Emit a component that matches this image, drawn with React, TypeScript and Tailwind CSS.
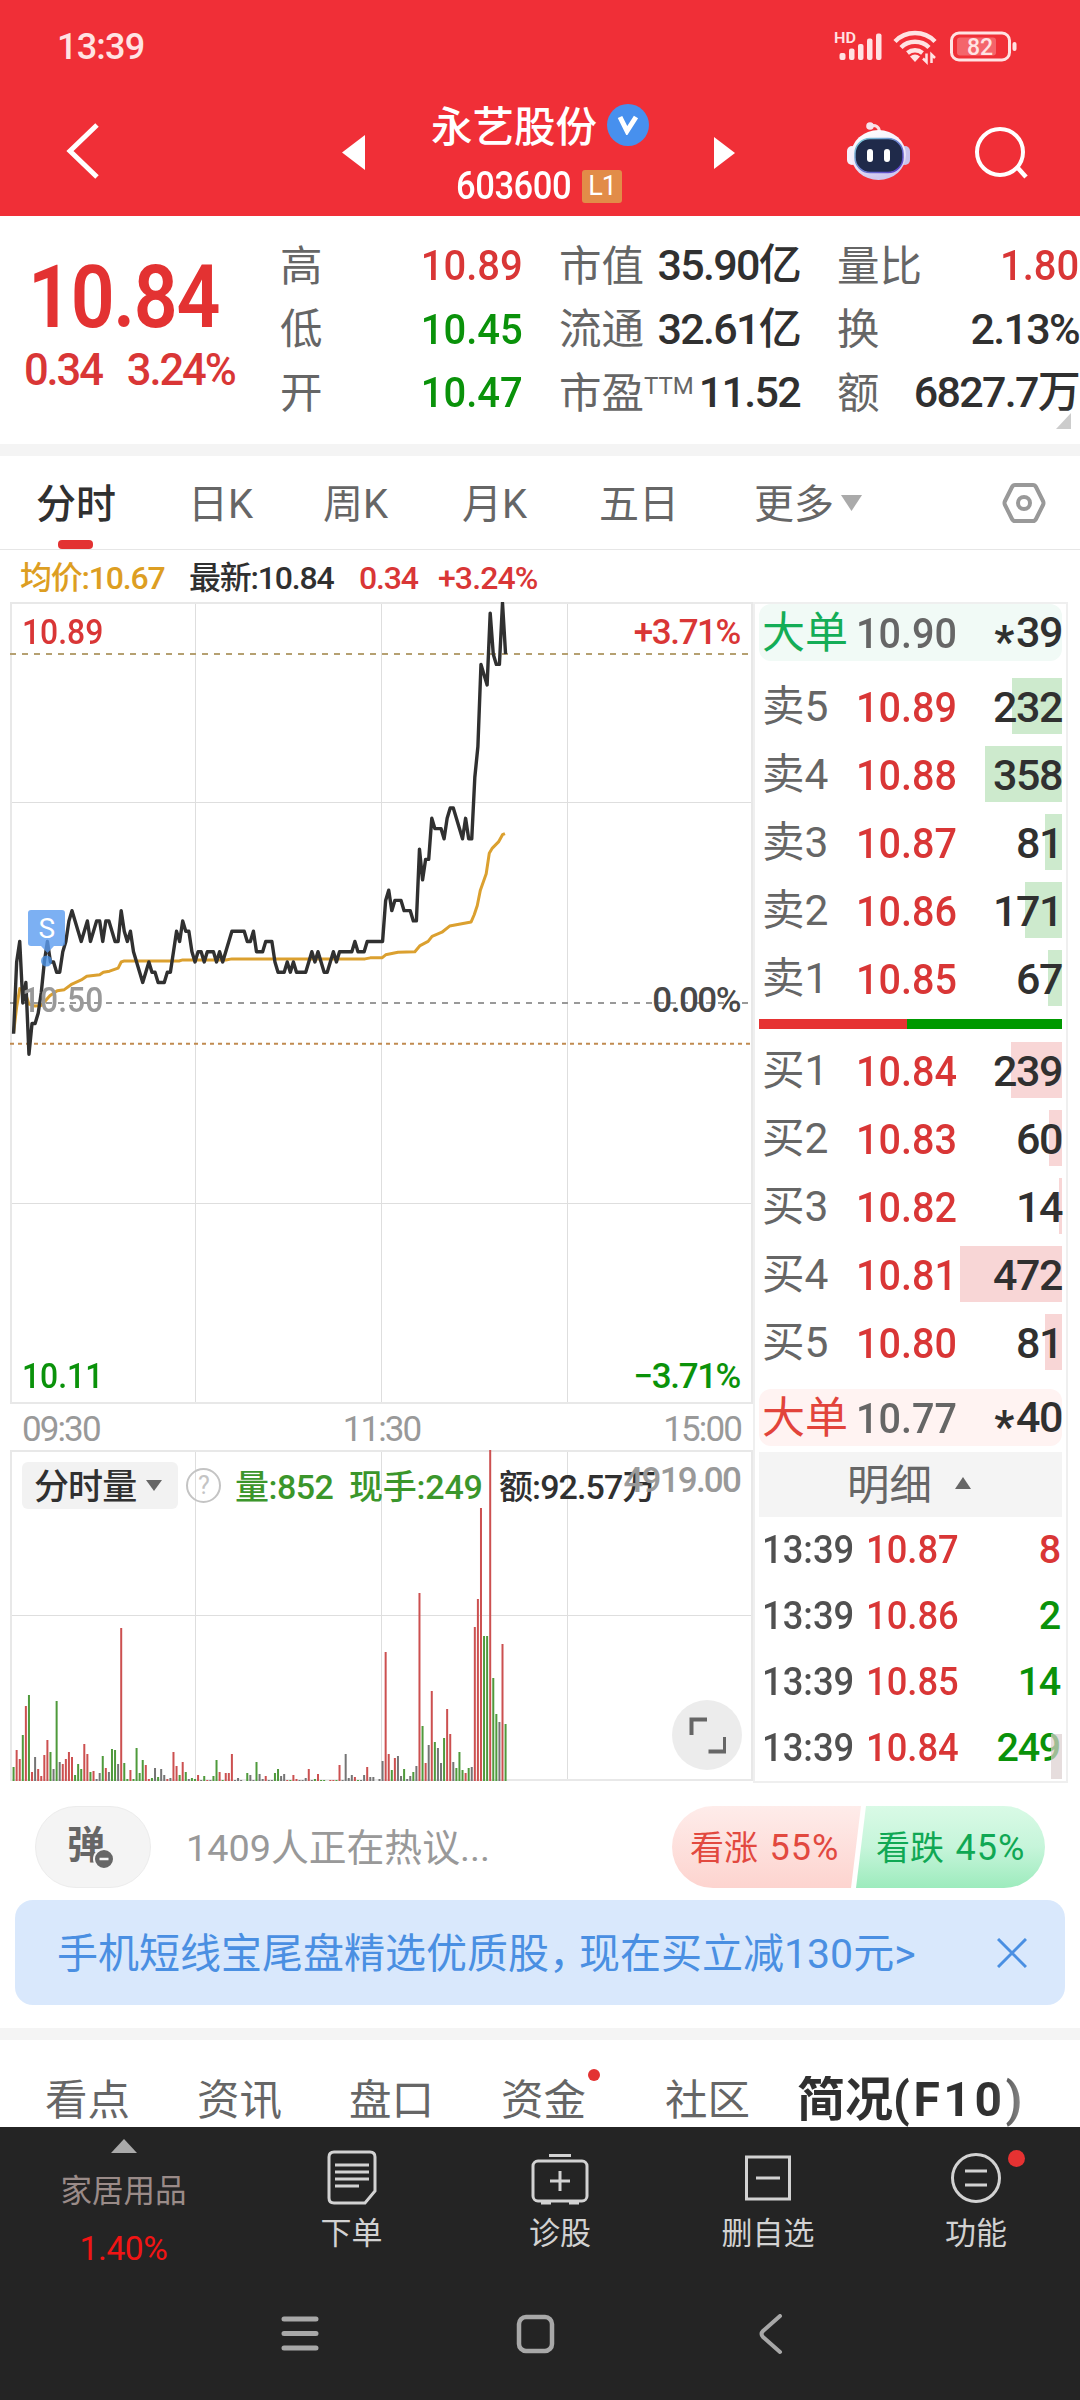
import type { ReactNode } from "react";
import clsx from "clsx";

const RED = "text-[#d93636]";
const GREEN = "text-[#0a920a]";

// cents above / below the previous close (10.50), one value per minute
const prices = [
  -3, 4, 6, 0, 2, -5, -2, -2, -1, 1, 4, 6, 4, 4, 3, 3, 5, 6, 8, 9, 8, 7, 6, 7, 8, 6, 7, 8, 8, 6, 8, 8, 7, 6, 6, 9, 7, 6, 7, 5,
  4, 3, 2, 3, 4, 3, 3, 2, 2, 2, 3, 3, 5, 7, 6, 8, 7, 7, 5, 4, 5, 5, 4, 5, 5, 5, 4, 5, 4, 5, 6, 7, 7, 7, 7, 7, 6, 6, 7, 5,
  5, 5, 6, 6, 6, 4, 3, 3, 3, 4, 3, 4, 3, 3, 3, 3, 4, 5, 4, 5, 4, 3, 3, 4, 5, 4, 5, 5, 5, 5, 5, 6, 5, 5, 5, 6, 6, 6, 6, 6,
  6, 10, 11, 9, 10, 10, 10, 9, 9, 9, 8, 8, 15, 12, 14, 14, 18, 17, 17, 17, 16, 18, 19, 19, 18, 17, 16, 18, 16, 16, 22, 25, 33, 32, 31, 38, 34, 33, 33, 39,
  34,
];

// [minute, cents]
const average: [number, number][] = [
  [1, -2.9], [2, -0.4], [3, 1.4], [4, 1.3], [5, 0.8], [6, -0.1], [8, -0.3], [10, -0.25], [11, 0.1], [12.8, 0.7],
  [15.2, 1.2], [17.5, 1.3], [20, 1.85], [23, 2.25], [24.8, 2.6], [29, 2.75], [30.2, 3], [32.2, 3.1], [35, 3.4], [36, 4],
  [37, 4.1], [54.8, 4.1], [56, 4.2], [70, 4.2], [72, 4.3], [115.3, 4.3], [117, 4.4], [120.8, 4.4], [122, 4.7], [126, 4.95],
  [131.5, 5], [133.2, 5.6], [135.8, 6], [137.1, 6.5], [140.3, 6.9], [142.8, 7.5], [149.8, 7.9], [150.8, 8.6], [151.8, 9.5],
  [152.8, 11], [154.7, 12.6], [155.7, 14.6], [156.7, 15.1], [158.7, 15.7], [160, 16.4], [160.8, 16.5],
];

// r = up, g = down, k = flat, followed by the bar height
const volumes = (
  "g14 r31 r22 g46 r75 g86 r9 k24 r12 r5 r26 r41 g29 k12 g80 k19 r17 r22 r29 r24 g6 g17 g12 r37 r27 g9 r10 k2 k8 g25 r13 k9 g32 g31 k17 r153 g18 g2 r11 g2 " +
  "g33 g8 g21 r16 r2 g3 k13 g4 k12 k6 r2 k3 r29 r15 g6 r19 g9 k2 g3 g2 r6 k1 g5 r1 k1 g5 g21 r9 g1 r8 r8 r27 k1 k3 k1 k0 g8 k6 k1 g19 " +
  "k7 k2 r5 k1 k1 g8 g12 k5 k7 r1 g1 r6 r2 k1 k1 k3 r12 k1 g2 r7 g1 g1 k0 r1 r1 g1 r16 k1 k27 k3 k6 r4 g1 k1 k6 r14 k4 k4 k0 k2 " +
  "k20 r129 r27 g11 r23 k25 k5 g12 k2 k5 g9 k15 r188 g55 r18 k36 r90 g39 k33 k18 g43 r72 r47 k19 g13 g29 g11 r8 g13 k14 r154 r182 r273 g145 g145 r331 g103 g67 k59 r137 g57"
).split(" ");

const BAR: Record<string, string> = { r: "#cc5050", g: "#4f9a3c", k: "#757575" };

const px = (minute: number) => 0.5 + minute * 3.075;
const py = (cents: number) => 401 - cents * 10.26;

const asks = [
  { label: "卖5", price: "10.89", vol: 232 },
  { label: "卖4", price: "10.88", vol: 358 },
  { label: "卖3", price: "10.87", vol: 81 },
  { label: "卖2", price: "10.86", vol: 171 },
  { label: "卖1", price: "10.85", vol: 67 },
];

const bids = [
  { label: "买1", price: "10.84", vol: 239 },
  { label: "买2", price: "10.83", vol: 60 },
  { label: "买3", price: "10.82", vol: 14 },
  { label: "买4", price: "10.81", vol: 472 },
  { label: "买5", price: "10.80", vol: 81 },
];

const ticks = [
  { price: "10.87", vol: "8", color: RED },
  { price: "10.86", vol: "2", color: GREEN },
  { price: "10.85", vol: "14", color: GREEN },
  { price: "10.84", vol: "249", color: GREEN },
];

function StatusBar() {
  return (
    <div className="flex h-[93px] items-center justify-between pl-[57px] pr-[63px] text-[#ffe3e3]">
      <span className="text-[36px] font-medium leading-none tracking-[-0.800px]">13:39</span>
      <svg width="184" height="40" viewBox="0 0 184 40" fill="none">
        <text x="1" y="15.500" fill="currentColor" fontSize="15" fontWeight="600" textLength="22" lengthAdjust="spacingAndGlyphs">HD</text>
        <g fill="currentColor">
          <rect x="6.500" y="26" width="6" height="7" rx="2" />
          <rect x="16" y="21.500" width="5.500" height="11.500" rx="2" />
          <rect x="25" y="17" width="5.500" height="16" rx="2" />
          <rect x="34" y="11.500" width="5.500" height="21.500" rx="2" />
          <rect x="43" y="6.500" width="5.500" height="26.500" rx="2" />
        </g>
        <g stroke="currentColor" strokeWidth="4.500">
          <path d="M62 14.500a28 28 0 0 1 40 0" />
          <path d="M68 20.500a20 20 0 0 1 28 0" />
          <path d="M74.500 26a12 12 0 0 1 15 0" />
        </g>
        <path d="M82 35l-5-5.500q5-4 10 0z" fill="currentColor" />
        <path d="M93.500 26.500V35l-3.500-3.500M98.500 36v-8.500l3.500 3.500" stroke="currentColor" strokeWidth="2.500" />
        <rect x="118.500" y="6" width="58" height="27" rx="7.500" stroke="currentColor" strokeWidth="3" />
        <rect x="124" y="10.500" width="39" height="18" rx="3" fill="currentColor" opacity="0.3" />
        <rect x="179.500" y="15" width="4" height="9" rx="2" fill="currentColor" />
        <text x="134" y="28" fill="currentColor" fontSize="23" fontWeight="500">82</text>
      </svg>
    </div>
  );
}

function Robot() {
  return (
    <svg width="66" height="62" viewBox="0 0 66 62">
      <defs>
        <linearGradient id="shell" x1="0" y1="0" x2="0.300" y2="1">
          <stop offset="0" stopColor="#fff" />
          <stop offset="0.600" stopColor="#f1ebfa" />
          <stop offset="1" stopColor="#cfc8ee" />
        </linearGradient>
        <linearGradient id="rim" x1="0" y1="0" x2="1" y2="1">
          <stop offset="0" stopColor="#7fd0d8" />
          <stop offset="1" stopColor="#5a35c8" />
        </linearGradient>
      </defs>
      <path d="M24 5q9-2 9.500 6" stroke="#fbdfe4" strokeWidth="3" fill="none" />
      <circle cx="24" cy="5" r="3.800" fill="#f6e4ee" />
      <rect x="1" y="25" width="10" height="19" rx="5" fill="#f6f0fb" />
      <rect x="54" y="25" width="10" height="19" rx="5" fill="#c9c3ec" />
      <ellipse cx="32.500" cy="34" rx="27.500" ry="25" fill="url(#shell)" />
      <rect x="9" y="17.500" width="48" height="34" rx="15" fill="#1f2a4a" stroke="url(#rim)" strokeWidth="1.500" />
      <rect x="21" y="28" width="6" height="13" rx="3" fill="#fff" />
      <rect x="38" y="28" width="6" height="13" rx="3" fill="#fff" />
    </svg>
  );
}

function Header() {
  return (
    <header className="h-[216px] bg-[#f02f37] text-white">
      <StatusBar />
      <div className="flex h-[123px] pl-[65px]">
        <svg className="mt-[28px]" width="36" height="60" viewBox="0 0 36 60" fill="none">
          <path d="M32 4L5 30l27 26" stroke="#fff" strokeWidth="5" />
        </svg>
        <svg className="ml-[241px] mt-[42px]" width="23" height="35">
          <path d="M23 0v35L0 17.500z" fill="#fff" />
        </svg>
        <div className="ml-[60px] mt-[8px] flex w-[230px] flex-col">
          <div className="flex h-[48px] items-center pl-[6px]">
            <span className="pt-[6px] text-[41.500px] font-medium leading-none">永艺股份</span>
            <span className="ml-[10px] flex size-[42px] shrink-0 items-center justify-center rounded-full bg-[#4790ee]">
              <svg width="22" height="20" viewBox="0 0 22 20" fill="none">
                <path d="M3 2l7 14L19 2" stroke="#fff" strokeWidth="5" />
              </svg>
            </span>
          </div>
          <div className="mt-[20px] flex h-[34px] items-center pl-[31px]">
            <span className="w-[114px] origin-left scale-x-[0.91] text-[38px] font-medium leading-none tracking-[-0.500px]">603600</span>
            <span className="ml-[12px] flex h-[33px] w-[40px] items-center justify-center rounded-[3px] bg-[#e28c48] text-[27px] leading-none tracking-[-1px]">L1</span>
          </div>
        </div>
        <svg className="ml-[59px] mt-[44px]" width="22" height="32">
          <path d="M0 0v32l21-16z" fill="#fff" />
        </svg>
        <span className="ml-[110px] mt-[28px]"><Robot /></span>
        <svg className="ml-[61px] mt-[28px]" width="60" height="62" viewBox="0 0 60 62" fill="none">
          <circle cx="27" cy="31" r="23" stroke="#fff" strokeWidth="4" />
          <path d="M44 46l9 10" stroke="#fff" strokeWidth="4.500" />
        </svg>
      </div>
    </header>
  );
}

function Stat({ label, value, color }: { label: ReactNode; value: string; color?: string }) {
  return (
    <div className="flex h-[63.500px] items-center justify-between whitespace-nowrap">
      <span className="pt-[2px] text-[42.500px] leading-none text-[#666]">{label}</span>
      <span
        className={clsx(
          "text-[43px] font-medium leading-none",
          color ? "origin-right scale-x-[0.93]" : "tracking-[-1.700px] text-[#303030]",
          color,
        )}
      >
        {value}
      </span>
    </div>
  );
}

function Quote() {
  return (
    <section className="flex h-[228px]">
      <div className={clsx("w-[280px] pt-[38px]", RED)}>
        <div className="ml-[28px] origin-left scale-x-[0.885] text-[87px] font-semibold leading-[86px] tracking-[-1.500px] text-[#e33232]">10.84</div>
        <div className="mt-[9px] flex gap-[25px] pl-[24px] text-[43.500px] font-medium leading-[44px] tracking-[-2.100px]">
          <span>0.34</span>
          <span>3.24%</span>
        </div>
      </div>
      <div className="w-[243px] pt-[18px]">
        <Stat label="高" value="10.89" color={RED} />
        <Stat label="低" value="10.45" color={GREEN} />
        <Stat label="开" value="10.47" color={GREEN} />
      </div>
      <div className="ml-[36px] w-[241px] pt-[18px]">
        <Stat label="市值" value="35.90亿" />
        <Stat label="流通" value="32.61亿" />
        <Stat label={<>市盈<sup className="relative top-[-14px] align-baseline text-[24px]">TTM</sup></>} value="11.52" />
      </div>
      <div className="relative ml-[37px] w-[242px] pt-[18px]">
        <Stat label="量比" value="1.80" color={RED} />
        <Stat label="换" value="2.13%" />
        <Stat label="额" value="6827.7万" />
        <svg className="absolute right-[8px] top-[197px]" width="15" height="16">
          <path d="M15 0v16H0z" fill="#ccc" />
        </svg>
      </div>
    </section>
  );
}

function PeriodTabs() {
  return (
    <nav className="relative flex h-[94px] items-center border-b border-[#e6e6e6] pl-[36px] text-[40px] leading-none text-[#666]">
      <span className="w-[152px] pt-[4px] font-medium text-[#303030]">分时</span>
      <span className="w-[135px] pt-[4px]">日K</span>
      <span className="w-[139px] pt-[4px]">周K</span>
      <span className="w-[137px] pt-[4px]">月K</span>
      <span className="w-[155px] pt-[4px]">五日</span>
      <span className="w-[87px] pt-[4px]">更多</span>
      <svg width="21" height="16"><path d="M0 0h21L10.500 16z" fill="#aaa" /></svg>
      <svg className="ml-[140px]" width="44" height="42" viewBox="0 0 44 42" fill="none" stroke="#999" strokeWidth="4">
        <path d="M13 3h18q2 0 3 2l7 14q1 2 0 4l-7 14q-1 2-3 2H13q-2 0-3-2L3 23q-1-2 0-4L10 5q1-2 3-2z" />
        <circle cx="22" cy="21" r="6" />
      </svg>
      <span className="absolute bottom-0 left-[58px] h-[9px] w-[35px] rounded-[4px] bg-[#e33232]" />
    </nav>
  );
}

function Legend() {
  return (
    <div className="flex h-[52px] items-center pl-[20px] pt-[4px] text-[32px] font-medium leading-none tracking-[-1.200px]">
      <span className="w-[169px] text-[#dd9e22]">均价:10.67</span>
      <span className="w-[170px] text-[#303030]">最新:10.84</span>
      <span className={clsx("w-[79px]", RED)}>0.34</span>
      <span className={clsx("tracking-[-0.900px]", RED)}>+3.24%</span>
    </div>
  );
}

function PriceChart() {
  return (
    <div className="relative h-[802px] text-[35px] font-medium leading-none">
      <svg width="743" height="802" viewBox="0 0 743 802" fill="none">
        <g stroke="#dedede">
          <path d="M185.500 1v800M371.500 1v800M557.500 1v800M1 200.500h741M1 601.500h741" />
          <rect x="1" y="1" width="741" height="800" strokeWidth="2" stroke="#e8e8e8" />
        </g>
        <path d="M0 52h740" stroke="#b5a071" strokeWidth="2" strokeDasharray="6 6" />
        <path d="M0 401h740" stroke="#999" strokeWidth="2" strokeDasharray="6 6" />
        <path d="M0 441.700h740" stroke="#c08a50" strokeWidth="2" strokeDasharray="4 4" />
        <polyline points={average.map(([m, c]) => `${px(m)},${py(c)}`).join(" ")} stroke="#dba02f" strokeWidth="3" strokeLinejoin="round" />
        <polyline points={prices.map((c, i) => `${px(i + 1)},${py(c)}`).join(" ")} stroke="#303030" strokeWidth="3.400" strokeLinejoin="round" />
        <circle cx="36.500" cy="359" r="5.500" fill="#4a90e2" opacity="0.8" />
        <path d="M21 308h31q3 0 3 3v30q0 3-3 3h-8l-6.500 7-6.500-7h-10q-3 0-3-3v-30q0-3 3-3z" fill="#5b9cf0" opacity="0.8" />
        <text x="28.500" y="336" fill="#fff" fontSize="28" fontWeight="400">S</text>
      </svg>
      <span className={clsx("absolute left-[12px] top-[13px] origin-left scale-x-[0.91]", RED)}>10.89</span>
      <span className={clsx("absolute right-[13px] top-[13px] tracking-[-1.400px]", RED)}>+3.71%</span>
      <span className="absolute left-[12px] top-[381px] origin-left scale-x-[0.91] text-[#999]">10.50</span>
      <span className="absolute right-[13px] top-[381px] tracking-[-1.500px] text-[#484848]">0.00%</span>
      <span className={clsx("absolute left-[12px] top-[757px] origin-left scale-x-[0.91]", GREEN)}>10.11</span>
      <span className={clsx("absolute right-[13px] top-[757px] tracking-[-1.400px]", GREEN)}>−3.71%</span>
    </div>
  );
}

function VolumeChart() {
  return (
    <div className="relative h-[331px]">
      <svg width="743" height="331" viewBox="0 0 743 331">
        <g stroke="#dedede" fill="none">
          <path d="M185.500 1v329M371.500 1v329M557.500 1v329M1 165.500h741" />
          <rect x="1" y="1" width="741" height="329" strokeWidth="2" stroke="#e8e8e8" />
        </g>
        {volumes.map((v, i) => {
          const h = Number(v.slice(1));
          return <rect key={i} x={px(i + 1) - 1} y={331 - h} width="2" height={h} fill={BAR[v[0]]} />;
        })}
      </svg>
      <div className="absolute left-[12px] right-[11px] top-[12px] flex h-[47px] items-center whitespace-nowrap text-[34px] font-medium leading-none tracking-[-0.900px] text-[#303030]">
        <span className="flex h-full w-[156px] items-center rounded-[6px] bg-[#f2f2f2] pl-[12px] text-[35px]">
          <span className="pt-[3px]">分时量</span>
          <svg className="ml-[10px]" width="16" height="11"><path d="M0 0h16L8 11z" fill="#666" /></svg>
        </span>
        <span className="ml-[8px] flex size-[35px] items-center justify-center rounded-full border-2 border-[#c4c4c4] text-[25px] font-normal text-[#c4c4c4]">?</span>
        <span className="ml-[14px] w-[114px] pt-[2px] tracking-[-0.500px] text-[#3b962b]">量:852</span>
        <span className="w-[150px] pt-[2px] tracking-[-0.200px] text-[#3b962b]">现手:249</span>
        <span className="pt-[2px]">额:92.57万</span>
      </div>
      <span className="absolute right-[13px] top-[13px] text-[35px] font-medium leading-none tracking-[-1.800px] text-[#999]">4919.00</span>
      <span className="absolute bottom-[11px] right-[11px] flex size-[70px] items-center justify-center rounded-full bg-[#ececec]">
        <svg width="37" height="37" viewBox="0 0 37 37" fill="none" stroke="#666" strokeWidth="4">
          <path d="M18 2.500H2.500V18M36 20v14.500H19.500" />
        </svg>
      </span>
    </div>
  );
}

function BigOrder({ price, vol, className, color }: { price: string; vol: string; className: string; color: string }) {
  return (
    <div className={clsx("flex h-[57px] items-center rounded-[12px] pl-[3px] leading-none", className)}>
      <span className={clsx("w-[94px] pt-[2px] text-[43px]", color)}>大单</span>
      <span className="origin-left scale-x-[0.92] pt-[1px] text-[43px] font-medium text-[#666]">{price}</span>
      <span className="ml-auto flex pt-[1px] text-[43px] font-medium tracking-[-1.400px] text-[#303030]">
        <span className="relative top-[9px] mr-[3px] text-[44px] font-bold">*</span>
        {vol}
      </span>
    </div>
  );
}

function Level({ label, price, vol, bar }: { label: string; price: string; vol: number; bar: string }) {
  return (
    <div className="relative flex h-14 items-center pl-[3px] leading-none">
      <span className={clsx("absolute inset-y-0 right-0", bar)} style={{ width: vol * 0.2155 }} />
      <span className="relative w-[94px] pt-[3px] text-[42.500px] text-[#666]">{label}</span>
      <span className={clsx("relative origin-left scale-x-[0.92] pt-[2px] text-[43px] font-medium", RED)}>{price}</span>
      <span className="relative ml-auto pt-[2px] text-[43px] font-medium tracking-[-1.400px] text-[#303030]">{vol}</span>
    </div>
  );
}

function OrderBook() {
  return (
    <aside className="h-[1181px] w-[315px] border-2 border-[#efefef] pl-[4px] pr-[4px]">
      <BigOrder price="10.90" vol="39" className="bg-[#f1faf6]" color="text-[#14ad57]" />
      <div className="mt-[17px] flex flex-col gap-3">
        {asks.map((a) => <Level key={a.label} {...a} bar="bg-[#cdeacd]" />)}
      </div>
      <div className="mt-[13px] flex h-[10px]">
        <span className="w-[148px] bg-[#e63232]" />
        <span className="flex-1 bg-[#009900]" />
      </div>
      <div className="mt-[13px] flex flex-col gap-3">
        {bids.map((b) => <Level key={b.label} {...b} bar="bg-[#f8d6d6]" />)}
      </div>
      <div className="mt-[19px]">
        <BigOrder price="10.77" vol="40" className="bg-[#fff3f2]" color="text-[#e2443b]" />
      </div>
      <div className="mt-[6px] flex h-[65px] items-center bg-[#f4f4f4] pl-[88px] text-[42.500px] leading-none text-[#666]">
        <span className="pt-[4px]">明细</span>
        <svg className="mb-[4px] ml-[23px]" width="16" height="12"><path d="M0 12h16L8 0z" fill="#666" /></svg>
      </div>
      <div className="relative">
        {ticks.map((t) => (
          <div key={t.price} className="flex h-[66px] items-center pb-[1px] pl-[3px] pr-[2px] text-[39.500px] font-medium leading-none">
            <span className="w-[104px] origin-left scale-x-[0.92] text-[#505050]">13:39</span>
            <span className={clsx("origin-left scale-x-[0.92]", RED)}>{t.price}</span>
            <span className={clsx("ml-auto tracking-[-1.300px]", t.color)}>{t.vol}</span>
          </div>
        ))}
        <span className="absolute right-0 top-[217px] h-[45px] w-[11px] bg-[#dccfcf]/70" />
      </div>
    </aside>
  );
}

function Discussion() {
  return (
    <div className="flex h-[118px] items-center pl-[35px] pr-[35px] pt-[12px]">
      <span className="relative flex h-[82px] w-[116px] items-center justify-center rounded-full border border-[#ececec] bg-[#f4f4f4] pb-[4px] pr-[14px] text-[38px] font-bold leading-none text-[#666]">
        弹
        <svg className="absolute left-[56px] top-[40px]" width="24" height="24">
          <circle cx="12" cy="12" r="10" fill="#666" stroke="#f4f4f4" strokeWidth="2" />
          <path d="M7.500 12h9" stroke="#f4f4f4" strokeWidth="2.500" />
        </svg>
      </span>
      <span className="ml-[35px] pt-[3px] text-[37.800px] leading-none text-[#999]">1409人正在热议...</span>
      <div className="relative ml-auto h-[82px] w-[373px]">
        <svg className="absolute inset-0" width="373" height="82">
          <defs>
            <linearGradient id="up" x1="0" y1="0" x2="0" y2="1">
              <stop offset="0" stopColor="#feecea" />
              <stop offset="1" stopColor="#fdd4cf" />
            </linearGradient>
            <linearGradient id="down" x1="0" y1="0" x2="0" y2="1">
              <stop offset="0" stopColor="#d9fae6" />
              <stop offset="0.500" stopColor="#c6f5da" />
              <stop offset="1" stopColor="#9debbd" />
            </linearGradient>
          </defs>
          <path d="M41 0h148l-10 82H41a41 41 0 0 1 0-82z" fill="url(#up)" />
          <path d="M194 0h138a41 41 0 0 1 0 82H184z" fill="url(#down)" />
        </svg>
        <div className="relative flex h-full items-center pl-[18px] pt-[2px] text-[34px] leading-none">
          <span className="w-[186px] text-[#e2493f]">看涨 <span className="ml-[3px] text-[36px] tracking-[1px]">55%</span></span>
          <span className="text-[#10a854]">看跌 <span className="ml-[3px] text-[36px] tracking-[1px]">45%</span></span>
        </div>
      </div>
    </div>
  );
}

function Banner() {
  return (
    <div className="mx-[15px] flex h-[105px] items-center justify-between rounded-[18px] bg-[#d9e8fc] pl-[42px] pr-[38px] text-[#4a8fe2]">
      <span className="whitespace-nowrap pt-[3px] text-[41px] leading-none">
        手机短线宝尾盘精选优质股<span className="tracking-[-11px]">，</span>现在买立减130元&gt;
      </span>
      <svg width="30" height="30" viewBox="0 0 30 30" stroke="currentColor" strokeWidth="3">
        <path d="M1 1l28 28M29 1L1 29" />
      </svg>
    </div>
  );
}

function SectionTabs() {
  return (
    <nav className="flex h-[87px] items-center overflow-hidden whitespace-nowrap pl-[45px] pt-[35px] text-[42.500px] leading-none text-[#666]">
      <span className="w-[152px]">看点</span>
      <span className="w-[152px]">资讯</span>
      <span className="w-[152px]">盘口</span>
      <span className="relative w-[164px]">
        资金
        <span className="absolute left-[87px] top-[-11px] size-[12px] rounded-full bg-[#e33232]" />
      </span>
      <span className="w-[132px]">社区</span>
      <span className="bg-gradient-to-r from-[#303030] from-85% to-[#999] bg-clip-text pb-[3px] text-[48px] font-bold text-transparent">
        简况<span className="tracking-[3.600px]">(F10)</span>
      </span>
    </nav>
  );
}

function Tool({ label, className, children }: { label: string; className: string; children: ReactNode }) {
  return (
    <div className={clsx("flex flex-col items-center pt-[22px]", className)}>
      <svg width="60" height="58" viewBox="0 0 60 58" fill="none" stroke="#d2d2d2" strokeWidth="3">
        {children}
      </svg>
      <span className="mt-[11px] text-[31px] leading-none text-[#d2d2d2]">{label}</span>
    </div>
  );
}

function BottomBar() {
  return (
    <footer className="h-[273px] bg-[#242424]">
      <div className="flex h-[150px]">
        <div className="flex w-[247px] flex-col items-center pt-[12px] leading-none">
          <svg width="26" height="14"><path d="M0 14h26L13 0z" fill="#aaa" /></svg>
          <span className="mt-[23px] text-[31.500px] text-[#9a8b88]">家居用品</span>
          <span className="mt-[24px] text-[33.500px] tracking-[-0.400px] text-[#f21414]">1.40%</span>
        </div>
        <Tool label="下单" className="w-[209px]">
          <path d="M12 3h36q5 0 5 5v34L43 54H12q-5 0-5-5V8q0-5 5-5z" />
          <path d="M13 16h34M13 23h34M13 30h34M13 37h24" />
        </Tool>
        <Tool label="诊股" className="w-[208px]">
          <rect x="3" y="12" width="54" height="40" rx="5" />
          <path d="M19 6.500h22M30 22v20M20 32h20M11 54h10M39 54h10" />
        </Tool>
        <Tool label="删自选" className="w-[208px]">
          <rect x="8.500" y="8" width="43" height="42" />
          <path d="M18 29h24" />
        </Tool>
        <div className="relative flex w-[208px] justify-center">
          <Tool label="功能" className="w-full">
            <circle cx="30" cy="29" r="23.500" />
            <path d="M19 22h22M19 36h22" />
          </Tool>
          <span className="absolute left-[136px] top-[23px] size-[17px] rounded-full bg-[#e63232]" />
        </div>
      </div>
      <svg className="ml-[279px] mt-[37px]" width="506" height="44" viewBox="0 0 506 44" fill="none" stroke="#a8a8a8" strokeWidth="5" strokeLinecap="round">
        <path d="M5 5h32M5 19.500h32M5 34h32" />
        <rect x="240" y="3" width="33" height="34" rx="7" strokeWidth="4.500" />
        <path d="M501 2L484 17q-3 3 0 6l17 15" strokeWidth="4" />
      </svg>
    </footer>
  );
}

export default function App() {
  return (
    <div className="h-[2400px] w-[1080px] overflow-hidden bg-white font-['Roboto','Noto_Sans_CJK_SC',sans-serif]">
      <Header />
      <Quote />
      <div className="h-[12px] bg-[#f4f4f4]" />
      <PeriodTabs />
      <Legend />
      <div className="flex h-[1180px] items-start pl-[10px]">
        <div className="w-[743px]">
          <PriceChart />
          <div className="flex h-[46px] items-center justify-between pl-[12px] pr-[12px] pt-[4px] text-[35px] leading-none tracking-[-1.900px] text-[#999]">
            <span>09:30</span>
            <span>11:30</span>
            <span>15:00</span>
          </div>
          <VolumeChart />
        </div>
        <OrderBook />
      </div>
      <Discussion />
      <Banner />
      <div className="mt-[23px] h-[12px] bg-[#f4f4f4]" />
      <SectionTabs />
      <BottomBar />
    </div>
  );
}
